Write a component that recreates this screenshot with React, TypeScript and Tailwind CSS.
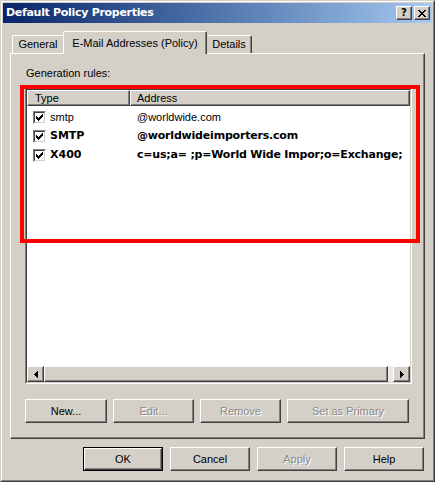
import React from "react";

const raised =
  "border border-t-white border-l-white border-r-[#404040] border-b-[#404040] shadow-[inset_-1px_-1px_0_#808080]";

function Check() {
  return (
    <svg width="7" height="7" viewBox="0 0 7 7" shapeRendering="crispEdges">
      <path
        d="M0 2h1v3H0z M1 3h1v3H1z M2 4h1v3H2z M3 3h1v3H3z M4 2h1v3H4z M5 1h1v3H5z M6 0h1v3H6z"
        fill="#000"
      />
    </svg>
  );
}

function Checkbox() {
  return (
    <div className="w-[13px] h-[13px] shrink-0 border border-t-[#808080] border-l-[#808080] border-r-white border-b-white">
      <div className="w-full h-full border border-t-[#404040] border-l-[#404040] border-r-[#d4d0c8] border-b-[#d4d0c8] bg-white flex items-center justify-center">
        <Check />
      </div>
    </div>
  );
}

function Arrow({ dir }: { dir: "left" | "right" }) {
  const d =
    dir === "left"
      ? "M0 3h1v1H0z M1 2h1v3H1z M2 1h1v5H2z M3 0h1v7H3z"
      : "M3 3h1v1H3z M2 2h1v3H2z M1 1h1v5H1z M0 0h1v7H0z";
  return (
    <div className={`w-[17px] h-full bg-[#d4d0c8] flex items-center justify-center ${raised}`}>
      <svg width="4" height="7" viewBox="0 0 4 7" shapeRendering="crispEdges">
        <path d={d} fill="#000" />
      </svg>
    </div>
  );
}

function Button({
  label,
  width,
  disabled,
  isDefault,
}: {
  label: string;
  width: string;
  disabled?: boolean;
  isDefault?: boolean;
}) {
  const inner = (
    <div
      className={`h-full w-full flex items-center justify-center bg-[#d4d0c8] ${raised} ${
        disabled ? "text-[#8c8a85] [text-shadow:1px_1px_0_#fff]" : "text-black"
      }`}
    >
      {label}
    </div>
  );
  if (isDefault) {
    return <div className={`${width} h-full border border-black`}>{inner}</div>;
  }
  return <div className={`${width} h-full`}>{inner}</div>;
}

const rows = [
  { type: "smtp", address: "@worldwide.com", bold: false },
  { type: "SMTP", address: "@worldwideimporters.com", bold: true },
  { type: "X400", address: "c=us;a= ;p=World Wide Impor;o=Exchange;", bold: true },
];

export default function App() {
  return (
    <div className="relative w-[435px] h-[482px] overflow-hidden bg-[#d4d0c8] font-['Liberation_Sans',Arial,sans-serif] text-[11px] text-black">
      <div className="h-full border border-t-[#d4d0c8] border-l-[#d4d0c8] border-r-[#404040] border-b-[#404040]">
        <div className="h-full border border-t-white border-l-white border-r-[#808080] border-b-[#808080] p-px flex flex-col">
          {/* title bar */}
          <div className="h-[20px] shrink-0 flex items-center bg-linear-to-r from-[#0a246a] to-[#a6caf0] pl-[3px] pr-[2px]">
            <span className="font-['DejaVu_Sans',sans-serif] font-bold text-[11px] text-white tracking-[-0.3px]">
              Default Policy Properties
            </span>
            <div className="ml-auto flex gap-[2px] h-[14px]">
              <div className={`w-[16px] h-full bg-[#d4d0c8] flex items-center justify-center ${raised}`}>
                <span className="font-['DejaVu_Sans',sans-serif] font-bold text-[10px] leading-none">?</span>
              </div>
              <div className={`w-[16px] h-full bg-[#d4d0c8] flex items-center justify-center ${raised}`}>
                <svg width="8" height="7" viewBox="0 0 8 7" shapeRendering="crispEdges">
                  <path
                    d="M0 0h2v1H0z M6 0h2v1H6z M1 1h2v1H1z M5 1h2v1H5z M2 2h4v1H2z M3 3h2v1H3z M2 4h4v1H2z M1 5h2v1H1z M5 5h2v1H5z M0 6h2v1H0z M6 6h2v1H6z"
                    fill="#000"
                  />
                </svg>
              </div>
            </div>
          </div>

          {/* tabs */}
          <div className="mt-[8px] h-[22px] shrink-0 flex items-end pl-[9px]">
            <div className="w-[51px] h-[18px] flex items-center justify-center border-t border-l border-t-white border-l-white rounded-tl-[2px]">
              General
            </div>
            <div className="relative z-10 -mb-px w-[144px] h-[23px] flex items-center justify-center bg-[#d4d0c8] border-t border-l border-r border-t-white border-l-white border-r-[#404040] shadow-[inset_-1px_0_0_#808080] rounded-t-[2px]">
              E-Mail Addresses (Policy)
            </div>
            <div className="w-[45px] h-[18px] flex items-center justify-center border-t border-r border-t-white border-r-[#404040] shadow-[inset_-1px_0_0_#808080] rounded-tr-[2px]">
              Details
            </div>
          </div>

          {/* panel */}
          <div className={`ml-[7px] w-[415px] h-[386px] shrink-0 flex flex-col ${raised}`}>
            <div className="mt-[12px] pl-[15px] leading-[14px]">Generation rules:</div>

            <div className="mt-[8px] ml-[14px] w-[387px] h-[296px] border border-t-[#808080] border-l-[#808080] border-r-white border-b-white">
              <div className="h-full flex flex-col bg-white border border-t-[#404040] border-l-[#404040] border-r-[#d4d0c8] border-b-[#d4d0c8]">
                <div className="h-[16px] shrink-0 flex bg-[#d4d0c8]">
                  <div className={`w-[103px] h-full flex items-center pl-[7px] ${raised}`}>Type</div>
                  <div className={`flex-1 h-full flex items-center pl-[6px] ${raised}`}>Address</div>
                </div>

                <div className="flex-1 pt-[2px]">
                  {rows.map((r) => (
                    <div key={r.type} className="h-[19px] flex items-center">
                      <div className="w-[103px] flex items-center pl-[6px] gap-[4px]">
                        <Checkbox />
                        <span
                          className={
                            r.bold
                              ? "font-['DejaVu_Sans',sans-serif] font-bold text-[11px]"
                              : "text-[11px]"
                          }
                        >
                          {r.type}
                        </span>
                      </div>
                      <span
                        className={`pl-[7px] whitespace-nowrap ${
                          r.bold
                            ? "font-['DejaVu_Sans',sans-serif] font-bold text-[11px] tracking-[-0.2px]"
                            : ""
                        }`}
                      >
                        {r.address}
                      </span>
                    </div>
                  ))}
                </div>

                {/* horizontal scrollbar */}
                <div className="h-[16px] shrink-0 flex bg-[#ece9e4]">
                  <Arrow dir="left" />
                  <div className={`w-[344px] h-full bg-[#d4d0c8] ${raised}`} />
                  <div className="flex-1" />
                  <Arrow dir="right" />
                </div>
              </div>
            </div>

            <div className="mt-[15px] ml-[14px] h-[24px] flex gap-[6px]">
              <Button label="New..." width="w-[82px]" />
              <Button label="Edit..." width="w-[81px]" disabled />
              <Button label="Remove" width="w-[81px]" disabled />
              <Button label="Set as Primary" width="w-[122px]" disabled />
            </div>
          </div>

          {/* dialog buttons */}
          <div className="mt-[8px] h-[24px] shrink-0 flex gap-[7px] pl-[80px]">
            <Button label="OK" width="w-[80px]" isDefault />
            <Button label="Cancel" width="w-[80px]" />
            <Button label="Apply" width="w-[80px]" disabled />
            <Button label="Help" width="w-[80px]" />
          </div>
        </div>
      </div>

      {/* red annotation */}
      <div className="pointer-events-none absolute left-[20px] top-[85px] w-[400px] h-[158px] border-4 border-[#ff0000]" />
    </div>
  );
}
